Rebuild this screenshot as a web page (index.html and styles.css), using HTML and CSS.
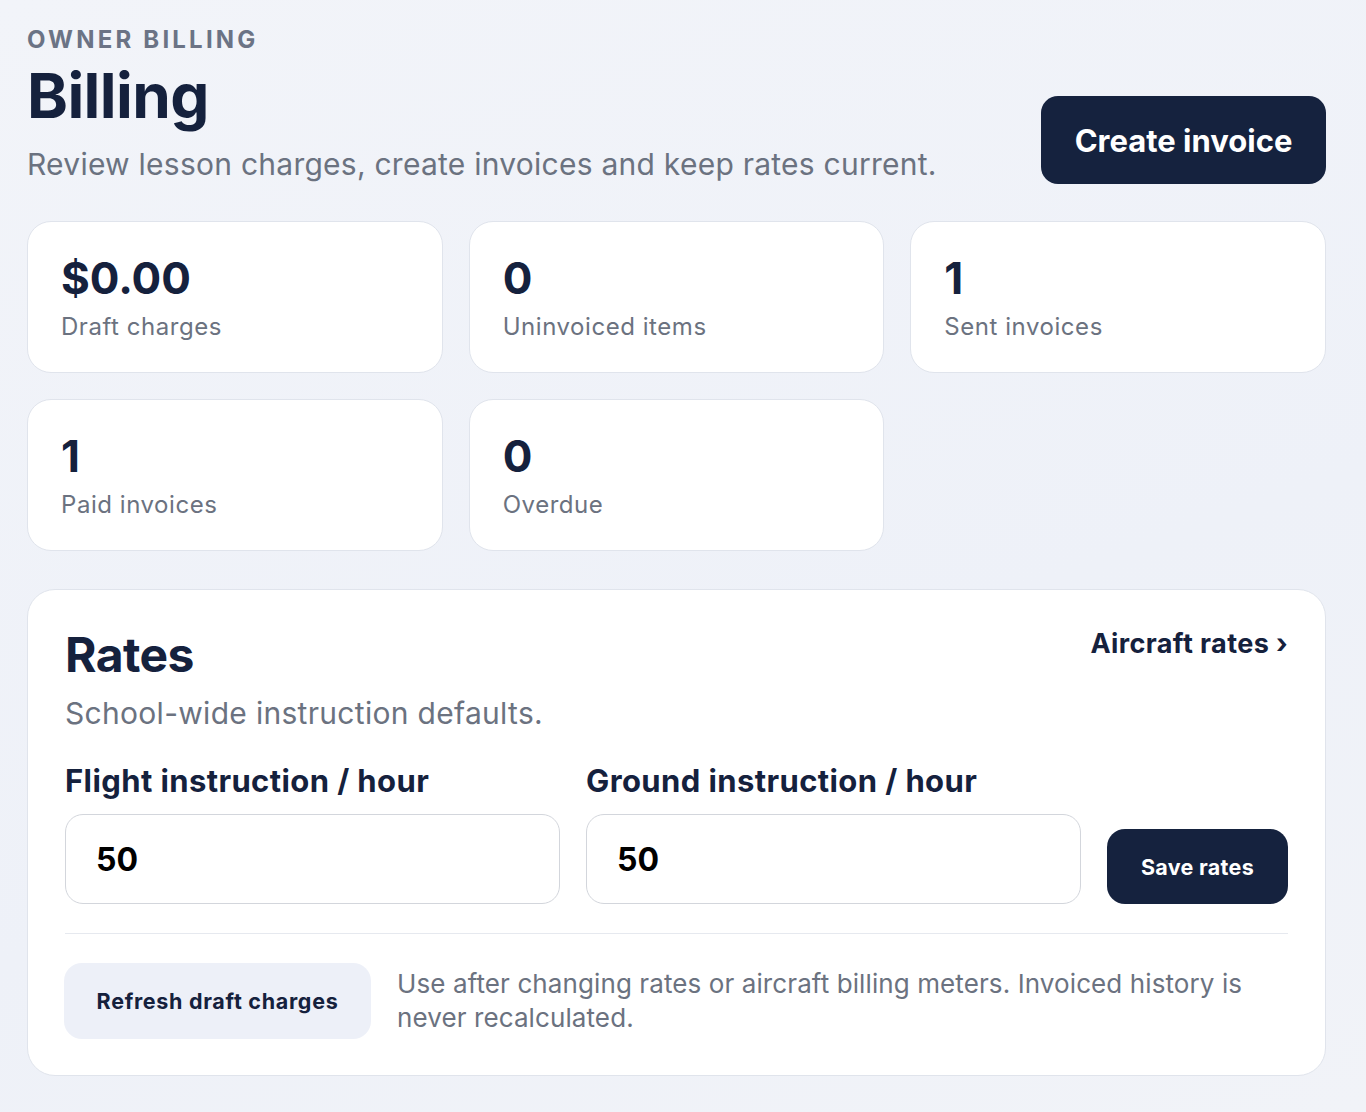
FILE: index.html
```html
<!DOCTYPE html>
<html lang="en">
<head>
<meta charset="utf-8">
<title>Billing</title>
<link rel="stylesheet" href="styles.css">
</head>
<body>
<main class="page">
  <header class="page-header">
    <div class="heading">
      <div class="eyebrow">Owner billing</div>
      <h1 class="title">Billing</h1>
      <p class="subtitle">Review lesson charges, create invoices and keep rates current.</p>
    </div>
    <button class="btn-primary btn-large">Create invoice</button>
  </header>

  <section class="stats">
    <div class="stat-card"><div class="stat-value">$0.00</div><div class="stat-label">Draft charges</div></div>
    <div class="stat-card"><div class="stat-value">0</div><div class="stat-label">Uninvoiced items</div></div>
    <div class="stat-card"><div class="stat-value">1</div><div class="stat-label">Sent invoices</div></div>
    <div class="stat-card"><div class="stat-value">1</div><div class="stat-label">Paid invoices</div></div>
    <div class="stat-card"><div class="stat-value">0</div><div class="stat-label">Overdue</div></div>
  </section>

  <section class="rates-card">
    <div class="rates-head">
      <div>
        <h2 class="rates-title">Rates</h2>
        <p class="rates-sub">School-wide instruction defaults.</p>
      </div>
      <a class="link" href="#">Aircraft rates ›</a>
    </div>
    <div class="rates-form">
      <label class="field">
        <span class="field-label">Flight instruction / hour</span>
        <input class="field-input" type="text" value="50">
      </label>
      <label class="field">
        <span class="field-label">Ground instruction / hour</span>
        <input class="field-input" type="text" value="50">
      </label>
      <button class="btn-primary btn-small">Save rates</button>
    </div>
    <div class="rates-foot">
      <button class="btn-soft">Refresh draft charges</button>
      <p class="foot-note">Use after changing rates or aircraft billing meters. Invoiced history is never recalculated.</p>
    </div>
  </section>
</main>
</body>
</html>
```
FILE: styles.css
```css
* { box-sizing: border-box; }
html, body { margin: 0; }
body {
  background: linear-gradient(160deg, #f2f4f9 0%, #eef1f8 60%, #f1f3f8 100%);
  font-family: Inter, "Noto Sans", sans-serif;
  color: #15213d;
  min-height: 1112px;
}
.page {
  padding: 25px 40px 30px 27px;
}
.page-header {
  display: flex;
  justify-content: space-between;
  align-items: flex-end;
}
.eyebrow {
  font-size: 24px;
  line-height: 29px;
  font-weight: 700;
  letter-spacing: 3.2px;
  text-transform: uppercase;
  color: #6b7385;
}
.title {
  margin: 7px 0 0;
  font-size: 62px;
  line-height: 69px;
  font-weight: 700;
  letter-spacing: -0.6px;
  color: #15213d;
}
.subtitle {
  margin: 15px 0 0;
  font-size: 30px;
  line-height: 39px;
  letter-spacing: 0.25px;
  color: #6b7280;
}
.btn-primary {
  background: #15223e;
  color: #fff;
  border: 0;
  font-family: inherit;
  font-weight: 700;
}
.btn-large {
  width: 285px;
  height: 88px;
  border-radius: 17px;
  font-size: 31px;
}
.stats {
  margin-top: 37px;
  display: grid;
  grid-template-columns: repeat(3, 1fr);
  gap: 26px;
}
.stat-card {
  background: #fff;
  border: 1.5px solid #e0e4ec;
  border-radius: 24px;
  height: 152px;
  padding: 29px 33px 0;
}
.stat-value {
  font-size: 44px;
  line-height: 54px;
  font-weight: 700;
  color: #15213d;
}
.stat-label {
  margin-top: 6px;
  font-size: 24px;
  line-height: 31px;
  color: #6b7280;
  letter-spacing: 0.55px;
}
.rates-card {
  margin-top: 38px;
  background: #fff;
  border: 1.5px solid #e0e4ec;
  border-radius: 28px;
  padding: 34px 37px 36px;
}
.rates-head {
  display: flex;
  justify-content: space-between;
  align-items: flex-start;
}
.rates-title {
  margin: 0;
  font-size: 48px;
  line-height: 62px;
  font-weight: 700;
  letter-spacing: -0.6px;
}
.rates-sub {
  margin: 8px 0 0;
  font-size: 30px;
  line-height: 39px;
  letter-spacing: 0.3px;
  color: #6b7280;
}
.link {
  margin-top: 2px;
  font-size: 27px;
  line-height: 35px;
  font-weight: 700;
  letter-spacing: 0.4px;
  color: #15213d;
  text-decoration: none;
}
.rates-form {
  margin-top: 29px;
  display: grid;
  grid-template-columns: 1fr 1fr 181px;
  gap: 26px;
  align-items: end;
}
.field {
  display: flex;
  flex-direction: column;
  gap: 15px;
}
.field-label {
  font-size: 31px;
  line-height: 37px;
  font-weight: 700;
  letter-spacing: 0.4px;
}
.field-input {
  height: 90px;
  border: 1.5px solid #d3d6dc;
  border-radius: 18px;
  padding: 0 30px;
  font-family: inherit;
  font-size: 32px;
  font-weight: 700;
  color: #000;
  background: #fff;
  width: 100%;
}
.btn-small {
  height: 75px;
  border-radius: 18px;
  font-size: 21.5px;
  letter-spacing: 0.3px;
}
.rates-foot {
  margin-top: 29px;
  border-top: 1.5px solid #e6e9ef;
  padding-top: 29px;
  display: flex;
  align-items: center;
  gap: 26px;
}
.btn-soft {
  flex: 0 0 307px;
  height: 76px;
  margin-left: -1px;
  border: 0;
  border-radius: 18px;
  background: #edf0f8;
  color: #15213d;
  font-family: inherit;
  font-size: 21.5px;
  font-weight: 700;
  letter-spacing: 0.7px;
}
.foot-note {
  margin: 0;
  font-size: 26px;
  line-height: 34px;
  color: #6b7280;
  letter-spacing: 0.1px;
}
```
